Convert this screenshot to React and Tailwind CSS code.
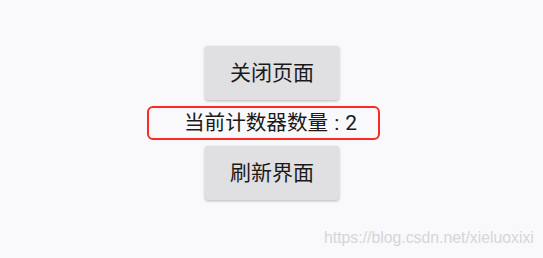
import React from "react";

export default function App() {
  const font = { fontFamily: 'Roboto, "Noto Sans CJK SC", sans-serif' };
  return (
    <div className="relative w-[543px] h-[258px] bg-[#f9f8fb] overflow-hidden" style={font}>
      <div className="flex flex-col items-center pt-[46px] pl-[1px]">
        <button className="w-[134px] h-[54px] rounded-[3px] bg-[#e0dfe2] shadow-[0_1px_3px_rgba(0,0,0,0.28)] text-[21px] text-[#1a1a1a] leading-none pt-[1px]">
          关闭页面
        </button>
        <div className="h-[46px] flex items-center">
          <div className="relative text-[21px] leading-[28px] text-[#1a1a1a] whitespace-nowrap mr-[3px]">
            <span className="text-[20.6px]">当前计数器数量</span>
            <span className="mx-[6px]">:</span>2
            <div className="absolute -left-[37px] -right-[23px] -top-[3px] -bottom-[3px] border-2 border-[#fb2a22] rounded-[6px]"></div>
          </div>
        </div>
        <button className="w-[134px] h-[54px] rounded-[3px] bg-[#e0dfe2] shadow-[0_1px_3px_rgba(0,0,0,0.28)] text-[21px] text-[#1a1a1a] leading-none pt-[1px]">
          刷新界面
        </button>
      </div>
      <div
        className="absolute left-[324px] top-[226px] text-[15.8px] text-[#d6d5da]"
        style={{ fontFamily: '"Liberation Sans", Arial, sans-serif' }}
      >
        https://blog.csdn.net/xieluoxixi
      </div>
    </div>
  );
}
